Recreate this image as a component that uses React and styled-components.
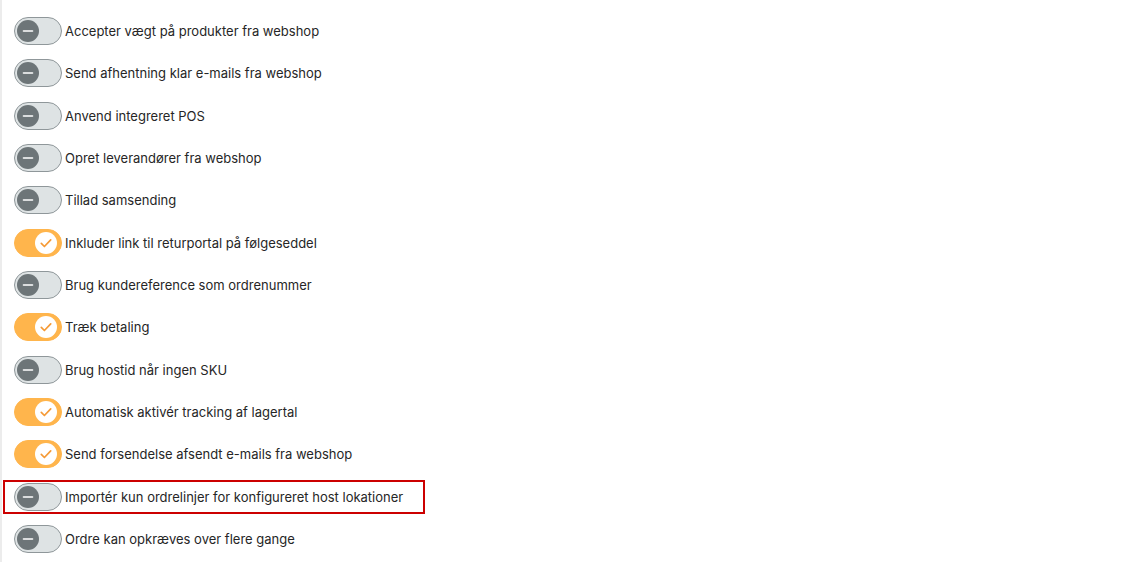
import React from "react";
import styled, { createGlobalStyle } from "styled-components";

const GlobalStyle = createGlobalStyle`
  html, body { margin: 0; padding: 0; background: #ffffff; }
  body { font-family: Inter, "Noto Sans", sans-serif; }
`;

const Page = styled.div`
  box-sizing: border-box;
  min-height: 562px;
  border-left: 2px solid #ececec;
  padding-top: 10px;
  display: flex;
  flex-direction: column;
`;

const Row = styled.div`
  height: 42.33px;
  display: flex;
  align-items: center;
`;

const Item = styled.label`
  box-sizing: border-box;
  height: 34px;
  margin-left: 1px;
  padding: 0 20px 0 9px;
  display: inline-flex;
  align-items: center;
  gap: 3px;
  border: 2px solid ${(p) => (p.$highlight ? "#cc0000" : "transparent")};
`;

const Track = styled.span`
  box-sizing: border-box;
  position: relative;
  width: 48px;
  height: 28px;
  border-radius: 14px;
  flex: none;
  background: ${(p) => (p.$on ? "#ffb54c" : "#dee3e4")};
  border: 1px solid ${(p) => (p.$on ? "#ffb54c" : "#8f979a")};
`;

const Knob = styled.span`
  position: absolute;
  top: 2px;
  left: ${(p) => (p.$on ? "20px" : "2px")};
  width: 22px;
  height: 22px;
  border-radius: 50%;
  background: ${(p) => (p.$on ? "#ffffff" : "#6d7578")};
  display: flex;
  align-items: center;
  justify-content: center;
`;

const Label = styled.span`
  font-size: 13px;
  color: #262626;
  white-space: nowrap;
`;

const MinusIcon = () => (
  <svg width="12" height="12" viewBox="0 0 12 12">
    <path d="M1.5 6h9" stroke="#ffffff" strokeWidth="1.6" strokeLinecap="round" />
  </svg>
);

const CheckIcon = () => (
  <svg width="14" height="14" viewBox="0 0 14 14">
    <path
      d="M2.3 7.4l3.1 3.1 6.3-6.6"
      fill="none"
      stroke="#f59a36"
      strokeWidth="1.7"
      strokeLinecap="round"
      strokeLinejoin="round"
    />
  </svg>
);

const Toggle = ({ on }) => (
  <Track $on={on}>
    <Knob $on={on}>{on ? <CheckIcon /> : <MinusIcon />}</Knob>
  </Track>
);

const settings = [
  { label: "Accepter vægt på produkter fra webshop", on: false },
  { label: "Send afhentning klar e-mails fra webshop", on: false },
  { label: "Anvend integreret POS", on: false },
  { label: "Opret leverandører fra webshop", on: false },
  { label: "Tillad samsending", on: false },
  { label: "Inkluder link til returportal på følgeseddel", on: true },
  { label: "Brug kundereference som ordrenummer", on: false },
  { label: "Træk betaling", on: true },
  { label: "Brug hostid når ingen SKU", on: false },
  { label: "Automatisk aktivér tracking af lagertal", on: true },
  { label: "Send forsendelse afsendt e-mails fra webshop", on: true },
  { label: "Importér kun ordrelinjer for konfigureret host lokationer", on: false, highlight: true },
  { label: "Ordre kan opkræves over flere gange", on: false },
];

export default function App() {
  return (
    <>
      <GlobalStyle />
      <Page>
        {settings.map((s) => (
          <Row key={s.label}>
            <Item $highlight={s.highlight}>
              <Toggle on={s.on} />
              <Label>{s.label}</Label>
            </Item>
          </Row>
        ))}
      </Page>
    </>
  );
}
